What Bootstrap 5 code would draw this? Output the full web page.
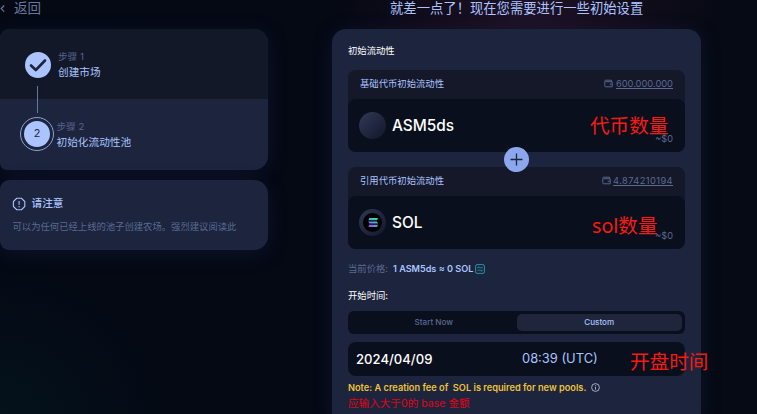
<!DOCTYPE html>
<html lang="zh-CN">
<head>
<meta charset="utf-8">
<meta name="viewport" content="width=device-width, initial-scale=1">
<title>创建流动性池</title>
<link href="https://cdn.jsdelivr.net/npm/bootstrap@5.3.0/dist/css/bootstrap.min.css" rel="stylesheet">
<style>
  html, body { height: 100%; overflow: hidden; }
  body {
    font-family: Inter, "Noto Sans CJK SC", sans-serif;
    font-size: 9.33px; line-height: 14px; color: #fff; white-space: nowrap;
    background:
      radial-gradient(ellipse 190px 110px at 530px 10px, #1f1226 0%, rgba(22,14,30,.8) 50%, transparent 100%),
      radial-gradient(ellipse 170px 150px at 0 414px, #04121b, transparent),
      linear-gradient(90deg, #040914, #050914 50%, #060a14);
  }
  svg { display: block; flex: none; }
  .stage { height: 414px; overflow: hidden; position: relative; }
  .side { width: 268px; }
  .pool { width: 369px; margin-left: 64px; }
  .top-line { height: 29px; line-height: 16px; }
  .back { font-size: 13.5px; color: #68789f; }
  .headline { font-size: 13.33px; color: #abc4ff; padding-left: 58px; }
  .panel { background: #1c243e; box-shadow: 0 4px 20px rgba(39,46,110,.25); overflow: hidden; }
  .steps { border-radius: 9px 14px 14px 7px; height: 140.5px; }
  .step-done { height: 70px; background: #131829; padding-left: 25px; position: relative; }
  .step-now { padding-left: 20px; height: 70px; }
  .step-label { padding: 21px 0 0 7px; }
  .step-now .step-label { padding-left: 2.5px; }
  .step-no { font-size: 9.6px; color: #56658c; line-height: 14px; }
  .step-name { font-size: 10.67px; color: #abc4ff; line-height: 18px; }
  .disc { width: 26px; height: 26px; background: #abc4ff; color: #1c243e; font-size: 10.8px; }
  .step-done .disc { margin-top: 23px; }
  .ring { width: 34px; height: 34px; border: 1px solid #8ba1d4; margin-top: 18px; }
  .link-line { position: absolute; left: 37px; top: 57px; width: 1px; height: 27px; background: #66769c; z-index: 2; }
  .notice { height: 69.5px; margin-top: 10.5px; border-radius: 9px 14px 14px 9px; padding: 16px 12px 0; }
  .notice-title { font-size: 10.67px; color: #abc4ff; font-weight: 500; line-height: 16px; gap: 5.5px; }
  .notice-text { margin: 8px 0 0 .5px; }
  .dim { color: #5b6a93; }
  .pool-panel { height: 400px; border-radius: 14px; padding: 15px 16px 0; }
  .tokens { margin-top: 11.5px; }
  .token { background: #141829; border-radius: 8px; height: 82.5px; }
  .token + .plus + .token { margin-top: 14.5px; }
  .token-head { height: 29.5px; padding: 0 12px 1px; color: #abc4ff; }
  .token-body { height: 53px; background: #0a0f1d; border-radius: 8px; padding: 0 12px 0 11px; }
  .coin { width: 27px; height: 27px; background: linear-gradient(135deg, #303957, #11172a); }
  .coin-in { width: 19px; height: 19px; background: #000; }
  .symbol { font-size: 15.4px; font-weight: 500; margin-left: 6px; }
  .usd { font-size: 9.2px; margin-bottom: 6px; }
  .bal { font-size: 9.3px; text-decoration: underline; text-underline-offset: 1px; }
  .bal-row { gap: 2.5px; }
  .bal-long { letter-spacing: .4px; }
  .plus { width: 25px; height: 25px; background: #8da7ed; position: absolute; left: 155.500px; top: 77.5px; z-index: 2; }
  .price-row { margin-top: 12.5px; }
  .price { font-weight: 600; color: #abc4ff; font-size: 9.1px; margin: 0 2px 0 5px; }
  .toggle { height: 23px; background: #0a0f1d; border-radius: 6px; padding: 3px; font-size: 8.1px; font-weight: 500; margin-top: 8px; }
  .toggle-on { background: #1f263b; border-radius: 5px; color: #abc4ff; }
  .when { height: 34px; background: #0a0f1d; border-radius: 8px; margin-top: 8px; font-size: 13.1px; padding-left: 8px; }
  .when-date { width: 166px; }
  .when-time { color: #abc4ff; font-size: 12.9px; }
  .start-label { margin-top: 13px; }
  .fee-row { margin-top: 5px; gap: 4.5px; }
  .fee { color: #edc338; font-weight: 600; font-size: 9.22px; }
  .err { color: #e00413; font-size: 10.6px; margin-top: 2px; }
  .callout { position: absolute; color: #f51b12; font-family: "Noto Sans", "Noto Sans CJK SC", sans-serif; font-size: 19.6px; line-height: 24px; z-index: 5; }
</style>
<script src="https://cdn.jsdelivr.net/npm/bootstrap@5.3.0/dist/js/bootstrap.bundle.min.js"></script>
</head>
<body>
<div class="stage d-flex">
  <aside class="side">
    <div class="top-line back d-flex">
      <svg width="14" height="16" fill="none" stroke="#68789f" stroke-width="1.2"><path d="M4.2 5.5 1.2 8.6l3 3.1"/></svg>
      <span>返回</span>
    </div>
    <div class="panel steps">
      <div class="step-done d-flex">
        <div class="disc rounded-circle">
          <svg width="26" height="26" fill="none" stroke="#1c243e" stroke-width="2.6" stroke-linecap="round" stroke-linejoin="round"><path d="m6 13.500 4.800 4.500L20 8.500"/></svg>
        </div>
        <div class="step-label">
          <div class="step-no">步骤 1</div>
          <div class="step-name">创建市场</div>
        </div>
        <div class="link-line"></div>
      </div>
      <div class="step-now d-flex">
        <div class="ring rounded-circle d-flex align-items-center justify-content-center">
          <div class="disc rounded-circle d-flex align-items-center justify-content-center">2</div>
        </div>
        <div class="step-label">
          <div class="step-no">步骤 2</div>
          <div class="step-name">初始化流动性池</div>
        </div>
      </div>
    </div>
    <div class="panel notice">
      <div class="notice-title d-flex">
        <svg width="14" height="16" fill="none" stroke="#abc4ff" stroke-width="1.1"><path d="M4.700 2.300h4.800l3.300 3.300v4.800l-3.300 3.300H4.700l-3.300-3.300V5.600zM7.100 5v3.800M7.100 10v1.300"/></svg>
        <span>请注意</span>
      </div>
      <div class="dim notice-text">可以为任何已经上线的池子创建农场。强烈建议阅读此</div>
    </div>
  </aside>

  <main class="pool">
    <div class="top-line headline">就差一点了！现在您需要进行一些初始设置</div>
    <div class="panel pool-panel">
      <div>初始流动性</div>
      <div class="tokens position-relative">
        <div class="token">
          <div class="token-head d-flex align-items-center justify-content-between">
            <span>基础代币初始流动性</span>
            <span class="dim d-flex align-items-center bal-row">
              <svg width="9" height="9" fill="none" stroke="#56658c"><path d="M7.500 2.500V1.200H1.800a1 1 0 0 0-1 1v4.600a1 1 0 0 0 1 1h6.400V2.700H1.500M8.200 5.200H5.700"/></svg>
              <span class="bal">600.000.000</span>
            </span>
          </div>
          <div class="token-body d-flex align-items-center">
            <div class="coin rounded-circle"></div>
            <span class="symbol">ASM5ds</span>
            <span class="usd dim ms-auto align-self-end">~$0</span>
          </div>
        </div>
        <div class="plus rounded-circle">
          <svg width="25" height="25" stroke="#1c243e" stroke-width="1.3"><path d="M6.500 12.500h12M12.500 6.500v12"/></svg>
        </div>
        <div class="token">
          <div class="token-head d-flex align-items-center justify-content-between">
            <span>引用代币初始流动性</span>
            <span class="dim d-flex align-items-center bal-row">
              <svg width="9" height="9" fill="none" stroke="#56658c"><path d="M7.500 2.500V1.200H1.800a1 1 0 0 0-1 1v4.600a1 1 0 0 0 1 1h6.400V2.700H1.500M8.200 5.200H5.700"/></svg>
              <span class="bal bal-long">4.874210194</span>
            </span>
          </div>
          <div class="token-body d-flex align-items-center">
            <div class="coin rounded-circle d-flex align-items-center justify-content-center">
              <div class="coin-in rounded-circle d-flex align-items-center justify-content-center">
                <svg width="10" height="9" viewBox="0 0 10 9">
                  <defs><linearGradient id="sol" gradientUnits="userSpaceOnUse" x1="1" y1="9" x2="8" y2="0"><stop stop-color="#a04bf5"/><stop offset=".5" stop-color="#6a94e0"/><stop offset="1" stop-color="#22e5a5"/></linearGradient></defs>
                  <path fill="url(#sol)" d="M1.300 0H10L9 2.200H.300zM.300 3.400H9l1 2.200H1.300zM1.300 6.800H10L9 9H.300z"/>
                </svg>
              </div>
            </div>
            <span class="symbol">SOL</span>
            <span class="usd dim ms-auto align-self-end">~$0</span>
          </div>
        </div>
      </div>
      <div class="price-row d-flex align-items-center">
        <span class="dim">当前价格:</span>
        <span class="price">1 ASM5ds ≈ 0 SOL</span>
        <svg width="10" height="10" fill="none" stroke="#2496a5"><rect x=".6" y=".6" width="8.800" height="8.800" rx="1.500"/><path stroke-width=".8" d="M7.800 3.700H2.500l1.300-1.400M2.200 6.200h5.300L6.200 7.700"/></svg>
      </div>
      <div class="start-label">开始时间:</div>
      <div class="toggle d-flex text-center align-items-stretch">
        <div class="w-50 dim d-flex align-items-center justify-content-center">Start Now</div>
        <div class="w-50 toggle-on d-flex align-items-center justify-content-center">Custom</div>
      </div>
      <div class="when d-flex align-items-center">
        <span class="when-date fw-medium">2024/04/09</span>
        <span class="when-time">08:39 (UTC)</span>
      </div>
      <div class="fee-row d-flex align-items-center">
        <span class="fee">Note: A creation fee of&nbsp; SOL is required for new pools.</span>
        <svg width="9" height="9" fill="none" stroke="#b4bdd4" stroke-width=".9"><circle cx="4.500" cy="4.500" r="3.900"/><path d="M4.500 4v2.700M4.500 2.300v1"/></svg>
      </div>
      <div class="err">应输入大于0的 base 金额</div>
    </div>
  </main>

  <div class="callout" style="left:590px;top:114px">代币数量</div>
  <div class="callout" style="left:592px;top:214px">sol数量</div>
  <div class="callout" style="left:630px;top:350px">开盘时间</div>
</div>
</body>
</html>
